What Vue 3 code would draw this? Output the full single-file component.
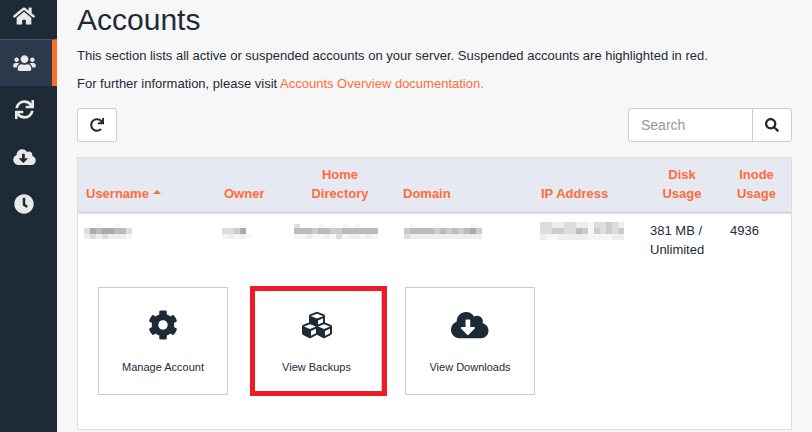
<script setup>
const icons = {
  home: { w: 576, d: 'M280.37 148.26L96 300.11V464a16 16 0 0 0 16 16l112.06-.29a16 16 0 0 0 15.92-16V368a16 16 0 0 1 16-16h64a16 16 0 0 1 16 16v95.64a16 16 0 0 0 16 16.05L464 480a16 16 0 0 0 16-16V300L295.67 148.26a12.19 12.19 0 0 0-15.3 0zM571.6 251.47L488 182.56V44.05a12 12 0 0 0-12-12h-56a12 12 0 0 0-12 12v72.61L318.47 43a48 48 0 0 0-61 0L4.34 251.47a12 12 0 0 0-1.6 16.9l25.5 31A12 12 0 0 0 45.15 301l235.22-193.74a12.19 12.19 0 0 1 15.3 0L530.9 301a12 12 0 0 0 16.9-1.6l25.5-31a12 12 0 0 0-1.7-16.93z' },
  users: { w: 640, d: 'M96 224c35.3 0 64-28.7 64-64s-28.7-64-64-64-64 28.7-64 64 28.7 64 64 64zm448 0c35.3 0 64-28.7 64-64s-28.7-64-64-64-64 28.7-64 64 28.7 64 64 64zm32 32h-64c-17.6 0-33.5 7.1-45.1 18.6 40.3 22.1 68.9 62 75.1 109.4h66c17.7 0 32-14.3 32-32v-32c0-35.3-28.7-64-64-64zm-256 0c61.9 0 112-50.1 112-112S381.9 32 320 32 208 82.1 208 144s50.1 112 112 112zm76.8 32h-8.3c-20.8 10-43.9 16-68.5 16s-47.6-6-68.5-16h-8.3C179.6 288 128 339.6 128 403.2V432c0 26.5 21.5 48 48 48h288c26.5 0 48-21.5 48-48v-28.8c0-63.6-51.6-115.2-115.2-115.2zm-223.7-13.4C161.5 263.1 145.6 256 128 256H64c-35.3 0-64 28.7-64 64v32c0 17.7 14.3 32 32 32h65.9c6.3-47.4 34.9-87.3 75.2-109.4z' },
  sync: { w: 512, d: 'M440.65 12.57l4 82.77A247.16 247.16 0 0 0 255.83 8C134.73 8 33.91 94.92 12.29 209.82A12 12 0 0 0 24.09 224h49.05a12 12 0 0 0 11.67-9.26 175.91 175.91 0 0 1 317-56.94l-101.46-4.86a12 12 0 0 0-12.57 12v47.41a12 12 0 0 0 12 12H500a12 12 0 0 0 12-12V12a12 12 0 0 0-12-12h-47.37a12 12 0 0 0-11.98 12.57zM255.83 432a175.61 175.61 0 0 1-146-77.8l101.8 4.87a12 12 0 0 0 12.57-12v-47.4a12 12 0 0 0-12-12H12a12 12 0 0 0-12 12V500a12 12 0 0 0 12 12h47.35a12 12 0 0 0 12-12.6l-4.15-82.57A247.17 247.17 0 0 0 255.83 504c121.11 0 221.93-86.92 243.55-201.82a12 12 0 0 0-11.8-14.18h-49.05a12 12 0 0 0-11.67 9.26A175.86 175.86 0 0 1 255.83 432z' },
  cloud: { w: 640, d: 'M537.6 226.6c4.1-10.7 6.4-22.4 6.4-34.6 0-53-43-96-96-96-19.7 0-38.1 6-53.3 16.2C367 64.2 315.3 32 256 32c-88.4 0-160 71.6-160 160 0 2.7.1 5.4.2 8.1C40.2 219.8 0 273.2 0 336c0 79.5 64.5 144 144 144h368c70.7 0 128-57.3 128-128 0-61.9-44-113.6-102.4-125.4zm-132.9 88.7L299.3 420.7c-6.2 6.2-16.4 6.2-22.6 0L171.3 315.3c-10.1-10.1-2.9-27.3 11.3-27.3H248V176c0-8.8 7.2-16 16-16h48c8.8 0 16 7.2 16 16v112h65.4c14.2 0 21.4 17.2 11.3 27.3z' },
  clock: { w: 512, d: 'M256,8C119,8,8,119,8,256S119,504,256,504,504,393,504,256,393,8,256,8Zm92.49,313h0l-20,25a16,16,0,0,1-22.49,2.5h0l-67-49.72a40,40,0,0,1-15-31.23V112a16,16,0,0,1,16-16h32a16,16,0,0,1,16,16V256l58,42.5A16,16,0,0,1,348.49,321Z' },
  redo: { w: 512, d: 'M500.33 0h-47.41a12 12 0 0 0-12 12.57l4 82.76A247.42 247.42 0 0 0 256 8C119.34 8 7.9 119.53 8 256.19 8.1 393.07 119.1 504 256 504a247.1 247.1 0 0 0 166.18-63.91 12 12 0 0 0 .48-17.43l-34-34a12 12 0 0 0-16.38-.55A176 176 0 1 1 402.1 157.8l-101.53-4.87a12 12 0 0 0-12.57 12v47.41a12 12 0 0 0 12 12h200.33a12 12 0 0 0 12-12V12a12 12 0 0 0-12-12z' },
  search: { w: 512, d: 'M505 442.7L405.3 343c-4.5-4.5-10.6-7-17-7H372c27.6-35.3 44-79.7 44-128C416 93.1 322.9 0 208 0S0 93.1 0 208s93.1 208 208 208c48.3 0 92.7-16.4 128-44v16.3c0 6.4 2.5 12.5 7 17l99.7 99.7c9.4 9.4 24.6 9.4 33.9 0l28.3-28.3c9.4-9.4 9.4-24.6.1-34zM208 336c-70.7 0-128-57.2-128-128 0-70.7 57.2-128 128-128 70.7 0 128 57.2 128 128 0 70.7-57.2 128-128 128z' },
  cog: { w: 512, d: 'M487.4 315.7l-42.6-24.6c4.3-23.2 4.3-47 0-70.2l42.6-24.6c4.9-2.8 7.1-8.6 5.5-14-11.1-35.6-30-67.8-54.7-94.6-3.8-4.1-10-5.1-14.8-2.3L380.8 110c-17.9-15.4-38.5-27.3-60.8-35.1V25.8c0-5.6-3.9-10.5-9.4-11.7-36.7-8.2-74.3-7.8-109.2 0-5.5 1.2-9.4 6.1-9.4 11.7V75c-22.2 7.9-42.8 19.8-60.8 35.1L88.7 85.5c-4.9-2.8-11-1.9-14.8 2.3-24.7 26.7-43.6 58.9-54.7 94.6-1.7 5.4.6 11.2 5.5 14L67.3 221c-4.3 23.2-4.3 47 0 70.2l-42.6 24.6c-4.9 2.8-7.1 8.6-5.5 14 11.1 35.6 30 67.8 54.7 94.6 3.8 4.1 10 5.1 14.8 2.3l42.6-24.6c17.9 15.4 38.5 27.3 60.8 35.1v49.2c0 5.6 3.9 10.5 9.4 11.7 36.7 8.2 74.3 7.8 109.2 0 5.5-1.2 9.4-6.1 9.4-11.7v-49.2c22.2-7.9 42.8-19.8 60.8-35.1l42.6 24.6c4.9 2.8 11 1.9 14.8-2.3 24.7-26.7 43.6-58.9 54.7-94.6 1.5-5.5-.7-11.3-5.6-14.1zM256 336c-44.1 0-80-35.9-80-80s35.9-80 80-80 80 35.9 80 80-35.9 80-80 80z' },
  cubes: { w: 512, d: 'M488.6 250.2L392 214V105.5c0-15-9.3-28.4-23.4-33.7l-100-37.5c-8.1-3.1-17.1-3.1-25.3 0l-100 37.5c-14.1 5.3-23.4 18.7-23.4 33.7V214l-96.6 36.2C9.3 255.5 0 268.9 0 283.9V394c0 13.6 7.7 26.1 19.9 32.2l100 50c10.1 5.1 22.1 5.1 32.2 0l103.9-52 103.9 52c10.1 5.1 22.1 5.1 32.2 0l100-50c12.2-6.1 19.9-18.6 19.9-32.2V283.9c0-15-9.3-28.4-23.4-33.7zM358 214.8l-85 31.9v-68.2l85-37v73.3zM154 104.1l102-38.2 102 38.2v.6l-102 41.4-102-41.4v-.6zm84 291.1l-85 42.5v-79.1l85-38.8v75.4zm0-112l-102 41.4-102-41.4v-.6l102-38.2 102 38.2v.6zm240 112l-85 42.5v-79.1l85-38.8v75.4zm0-112l-102 41.4-102-41.4v-.6l102-38.2 102 38.2v.6z' },
};

const nav = [
  { icon: 'home', cls: 'i-home' },
  { icon: 'users', cls: 'i-users', active: true },
  { icon: 'sync', cls: 'i-sync' },
  { icon: 'cloud', cls: 'i-cloud' },
  { icon: 'clock', cls: 'i-clock' },
];

const actions = [
  { icon: 'cog', label: 'Manage Account' },
  { icon: 'cubes', label: 'View Backups', marked: true },
  { icon: 'cloud', label: 'View Downloads' },
];

// Redacted values: each character is one 6px mosaic cell, as a grey level.
// The first row of the short mosaics is cut by `lift` pixels at the top.
function cells(rows, lift) {
  const out = [];
  rows.forEach((row, y) => {
    [...row].forEach((c, x) => {
      if (c !== '.') out.push({ x: x * 6, y: y * 6 - lift, fill: c === 'f' ? '#f6f6f6' : `#${c}${c}${c}` });
    });
  });
  return { w: rows[0].length * 6, h: rows.length * 6 - lift - (lift ? 1 : 0), cells: out };
}

const redacted = {
  user: cells(['..f..f..', 'dabaabbd', 'ededeeef'], 2),
  owner: cells(['...f.', 'ddca.', 'fefef'], 2),
  home: cells(['d...f.f.f.f...', 'bbbcbbccbbbbbb', 'ffeffefdfeefef'], 2),
  domain: cells(['.f...f.....f.', 'cbbbbcbcbcbac', 'deeeeeeeeeeee'], 2),
  ip: cells(['ddeeddeefddcde', 'ddccddbcfcdcdc', 'effeeeeeffffee'], 0),
};
</script>

<template>
  <div class="page">
    <nav class="side">
      <a v-for="item in nav" :key="item.icon" class="nav-item" :class="{ active: item.active }">
        <svg class="nav-icon" :class="item.cls" :viewBox="`0 0 ${icons[item.icon].w} 512`"><path :d="icons[item.icon].d" /></svg>
      </a>
    </nav>

    <main class="main">
      <h1 class="title">Accounts</h1>
      <p class="intro">This section lists all active or suspended accounts on your server. Suspended accounts are highlighted in red.</p>
      <p class="intro second">For further information, please visit <a class="link">Accounts Overview documentation.</a></p>

      <div class="toolbar">
        <button class="refresh">
          <svg class="tool-icon" viewBox="0 0 512 512"><path :d="icons.redo.d" /></svg>
        </button>
        <div class="search">
          <span class="search-input">Search</span>
          <span class="search-btn">
            <svg class="tool-icon" viewBox="0 0 512 512"><path :d="icons.search.d" /></svg>
          </span>
        </div>
      </div>

      <table class="grid">
        <colgroup>
          <col class="c1" /><col class="c2" /><col class="c3" /><col class="c4" />
          <col class="c5" /><col class="c6" /><col class="c7" />
        </colgroup>
        <thead>
          <tr>
            <th>Username <span class="caret"></span></th>
            <th>Owner</th>
            <th class="center">Home<br />Directory</th>
            <th>Domain</th>
            <th>IP Address</th>
            <th class="center">Disk<br />Usage</th>
            <th class="center">Inode<br />Usage</th>
          </tr>
        </thead>
        <tbody>
          <tr>
            <td v-for="(key, i) in ['user', 'owner', 'home', 'domain', 'ip']" :key="key">
              <svg class="mosaic" :class="`m${i}`" :width="redacted[key].w" :height="redacted[key].h" shape-rendering="crispEdges">
                <rect v-for="(c, n) in redacted[key].cells" :key="n" :x="c.x" :y="c.y" width="6" height="6" :fill="c.fill" />
              </svg>
            </td>
            <td class="num">381 MB /<br />Unlimited</td>
            <td class="num">4936</td>
          </tr>
          <tr>
            <td colspan="7" class="actions-cell">
              <div class="actions">
                <a v-for="a in actions" :key="a.label" class="action">
                  <svg class="action-icon" :viewBox="`0 0 ${icons[a.icon].w} 512`"><path :d="icons[a.icon].d" /></svg>
                  <span class="action-label">{{ a.label }}</span>
                  <span v-if="a.marked" class="marker"></span>
                </a>
              </div>
            </td>
          </tr>
        </tbody>
      </table>
    </main>
  </div>
</template>

<style>
html, body { margin: 0; background: #f7f7f7; }
</style>

<style scoped>
.page {
  display: flex;
  width: 812px;
  height: 432px;
  overflow: hidden;
  background: #f7f7f7;
  color: #1f2a37;
  font-family: "Liberation Sans", Arial, sans-serif;
  font-size: 13px;
  line-height: 19px;
}
.side {
  flex: 0 0 57px;
  margin-top: -8px;
  height: 440px;
  background: #1f2a37;
  display: flex;
  flex-direction: column;
}
.nav-item {
  box-sizing: border-box;
  height: 47px;
  flex: none;
  display: flex;
  align-items: center;
  justify-content: center;
  padding-right: 9px;
}
.nav-item.active {
  background: #2a3a4a;
  border-top: 1px solid #46535f;
  border-right: 5px solid #ff6c2c;
  padding-right: 4px;
}
.nav-icon { fill: #e9e9e9; display: block; }
.i-home { width: 22px; height: 20px; }
.i-users { width: 23px; height: 18px; }
.i-sync { width: 19px; height: 19px; }
.i-cloud { width: 23px; height: 18px; }
.i-clock { width: 20px; height: 20px; }

.main { flex: 1; min-width: 0; padding: 3px 20px 0; }
.title { margin: 0 0 10px; font-size: 30px; line-height: 33px; font-weight: 400; }
.intro { margin: 0; }
.second { margin-top: 9px; }
.link { color: #ff6c3c; }

.toolbar { display: flex; justify-content: space-between; margin-top: 15px; }
.refresh {
  box-sizing: border-box;
  width: 40px;
  height: 34px;
  padding: 0;
  background: #fff;
  border: 1px solid #ccc;
  border-radius: 3px;
  display: flex;
  align-items: center;
  justify-content: center;
}
.tool-icon { width: 14px; height: 14px; fill: #1f2a37; display: block; }
.search { display: flex; height: 34px; }
.search-input {
  box-sizing: border-box;
  width: 125px;
  padding: 6px 12px;
  background: #fff;
  border: 1px solid #ccc;
  border-radius: 3px 0 0 3px;
  color: #999;
  font-size: 14px;
  line-height: 20px;
}
.search-btn {
  box-sizing: border-box;
  width: 40px;
  margin-left: -1px;
  background: #fff;
  border: 1px solid #ccc;
  border-radius: 0 3px 3px 0;
  display: flex;
  align-items: center;
  justify-content: center;
}

.grid {
  box-sizing: border-box;
  width: 715px;
  margin-top: 15px;
  table-layout: fixed;
  border-collapse: separate;
  border-spacing: 0;
  background: #fff;
  border: 1px solid #ddd;
}
.c1 { width: 138px; }
.c2 { width: 69px; }
.c3 { width: 110px; }
.c4 { width: 138px; }
.c5 { width: 109px; }
.c6 { width: 80px; }
.c7 { width: 69px; }
th {
  padding: 7px 8px 8px;
  background: #e6e9f1;
  border-bottom: 3px solid #ddd;
  color: #ff6c3c;
  font-weight: 700;
  text-align: left;
  vertical-align: bottom;
}
th.center { text-align: center; }
.caret {
  display: inline-block;
  width: 0;
  height: 0;
  margin: 0 0 5px 1px;
  vertical-align: middle;
  border-left: 4px solid transparent;
  border-right: 4px solid transparent;
  border-bottom: 4px solid #ff6c3c;
}
td { padding: 8px; vertical-align: top; }
.num { padding-top: 7px; }
.mosaic { display: block; }
.m0, .m1 { margin: 2px 0 0 -2px; }
.m2 { margin: 2px 0 0 1px; }
.m3 { margin: 2px 0 0 1px; }
.m4 { margin: 0 0 0 -1px; }
.actions-cell { padding: 20px 20px 34px; }
.actions { display: flex; gap: 23.5px; }
.action {
  position: relative;
  box-sizing: border-box;
  width: 130px;
  height: 108px;
  padding-top: 22px;
  border: 1px solid #ccc;
  background: #fff;
  display: flex;
  flex-direction: column;
  align-items: center;
  gap: 19px;
}
.action-icon { height: 30px; fill: #1f2a37; display: block; flex: none; }
.action-label { font-size: 11px; line-height: 17px; }
.marker {
  position: absolute;
  box-sizing: border-box;
  left: -3px;
  top: -2px;
  width: 137px;
  height: 110px;
  border: 5px solid #ed1c24;
}
</style>
